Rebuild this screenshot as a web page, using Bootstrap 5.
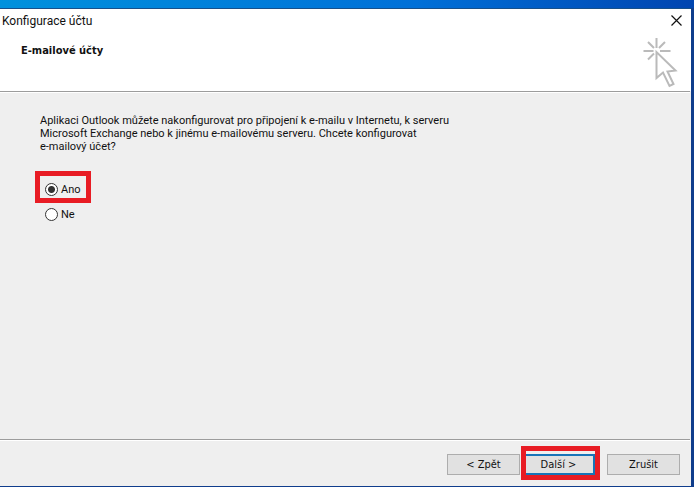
<!DOCTYPE html>
<html lang="cs">
<head>
<meta charset="utf-8">
<meta name="viewport" content="width=device-width, initial-scale=1">
<title>Konfigurace účtu</title>
<link rel="stylesheet" href="https://cdn.jsdelivr.net/npm/bootstrap@5.3.0/dist/css/bootstrap.min.css">
<style>
  body {
    font: 11px/13px Roboto, "Noto Sans", sans-serif;
    color: #111;
    padding: 8px 3px 1px 0;
    background: linear-gradient(to right, #0091dd, #0070d8 60%, #0045b0) top / 100% 8px no-repeat, #0f3d8c;
  }
  .dialog { background: #efefef; }
  .title-bar { height: 24px; background: #fff; border-top: 1px solid #17508a; }
  .title-bar h1 { font-size: 12px; line-height: 16px; font-weight: 400; padding-left: 2px; }
  .close-button { width: 30px; height: 23px; }
  .banner { height: 59px; background: #fff; padding: 6px 12px 0 21px; }
  .banner h2 { font: 700 11px/13px "DejaVu Sans Condensed", sans-serif; padding-top: 6px; }
  .rule { height: 2px; background: #fff; border-top: 1px solid #9c9c9c; margin-right: 1px; }
  .content { padding: 21px 40px; }
  .choices { padding: 30px 5px 0; gap: 12px; }
  .choice { gap: 3px; }
  .choice .form-check-input {
    width: 13px; height: 13px; background: #fff; border: 1px solid #333; box-shadow: none;
  }
  .choice .form-check-input:checked { background: radial-gradient(circle, #333 3px, #fff 4px); }
  .marked::after {
    content: ""; position: absolute; border: 5px solid #e81c24; pointer-events: none;
  }
  .choice.marked::after { inset: -12px -10px -7px -10px; }
  .actions { padding: 13px 11px 11px; }
  .dialog-button {
    width: 73px; height: 21px; padding: 0; font: 11px/13px "DejaVu Sans Condensed", sans-serif;
    color: #111; background: #e1e1e1; border: 1px solid #adadad; border-radius: 0;
  }
  .default-button { border: 2px solid #1874b8; }
  .button-mark { margin: 0 12px 0 2px; }
  .button-mark::after { inset: -8px -5px -5px -1px; }
</style>
<script src="https://cdn.jsdelivr.net/npm/bootstrap@5.3.0/dist/js/bootstrap.bundle.min.js" defer></script>
</head>
<body class="vh-100 d-flex overflow-hidden">
<form class="dialog flex-grow-1 d-flex flex-column">
  <header>
    <div class="title-bar d-flex align-items-center justify-content-between">
      <h1 class="m-0">Konfigurace účtu</h1>
      <button type="button" class="close-button btn p-0 border-0 d-flex align-items-center justify-content-center" aria-label="Zavřít">
        <svg width="11" height="11" viewBox="0 0 11 11" stroke="#111" stroke-width="1.2" aria-hidden="true"><path d="M.5.5l10 10M10.500.5l-10 10"/></svg>
      </button>
    </div>
    <div class="banner d-flex justify-content-between">
      <h2 class="m-0">E-mailové účty</h2>
      <svg width="36" height="51" viewBox="0 0 36 51" fill="none" stroke="#bababa" stroke-width="2" aria-hidden="true">
        <path d="M13.500 0v10M.5 13h10M17 13h10.500M5 4l6 6M22 4l-6 6M5 21.500l6-6M13.500 14v26l6.500-5.500 6.500 13.500 4-2-6-12.500 8-1z"/>
      </svg>
    </div>
    <div class="rule"></div>
  </header>
  <main class="content flex-grow-1">
    <p class="m-0" id="question">Aplikaci Outlook můžete nakonfigurovat pro připojení k e-mailu v Internetu, k serveru<br>Microsoft Exchange nebo k jinému e-mailovému serveru. Chcete konfigurovat<br>e-mailový účet?</p>
    <div class="choices d-flex flex-column align-items-start" role="radiogroup" aria-labelledby="question">
      <div class="choice marked position-relative d-flex align-items-center">
        <input class="form-check-input m-0" type="radio" name="configure" id="yes" checked>
        <label for="yes">Ano</label>
      </div>
      <div class="choice d-flex align-items-center">
        <input class="form-check-input m-0" type="radio" name="configure" id="no">
        <label for="no">Ne</label>
      </div>
    </div>
  </main>
  <footer>
    <div class="rule"></div>
    <div class="actions d-flex justify-content-end">
      <button type="button" class="dialog-button btn">&lt; Zpět</button>
      <div class="marked button-mark position-relative d-flex">
        <button type="submit" class="dialog-button default-button btn">Další &gt;</button>
      </div>
      <button type="button" class="dialog-button btn">Zrušit</button>
    </div>
  </footer>
</form>
</body>
</html>
